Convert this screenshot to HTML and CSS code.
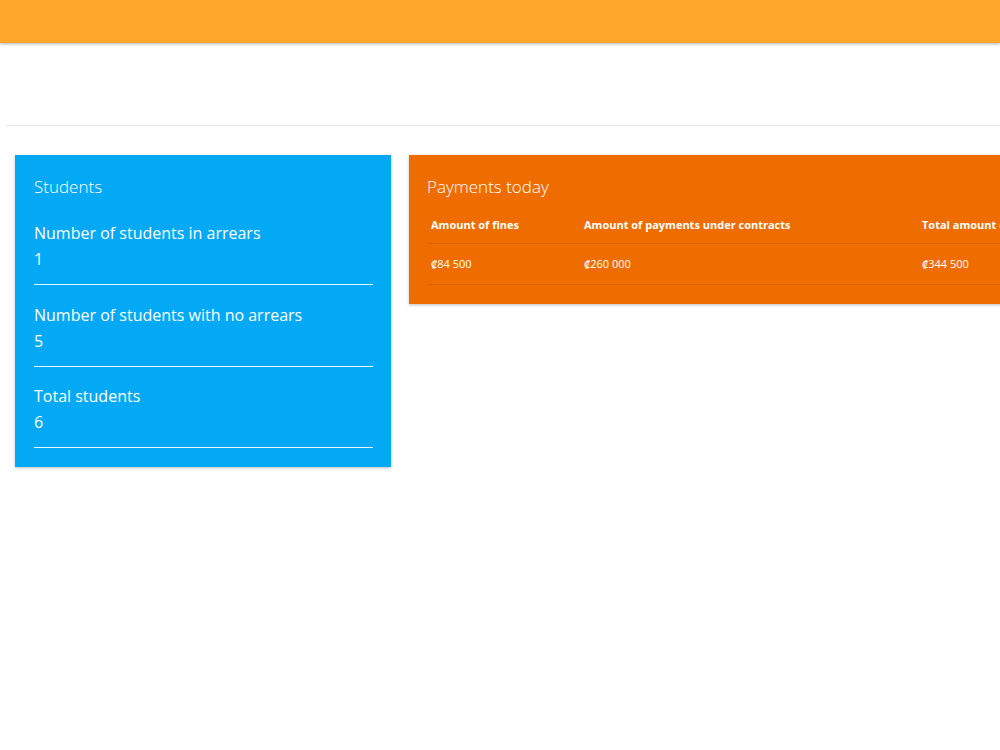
FILE: index.html
```html
<!DOCTYPE html>
<html>
<head>
<meta charset="utf-8">
<link rel="stylesheet" href="styles.css">
</head>
<body>
<header class="topbar"></header>
<div class="spacer"></div>
<main class="content">
  <section class="card card-blue">
    <h2 class="card-title">Students</h2>
    <div class="stat">
      <div class="stat-label">Number of students in arrears</div>
      <div class="stat-value">1</div>
    </div>
    <div class="stat">
      <div class="stat-label">Number of students with no arrears</div>
      <div class="stat-value">5</div>
    </div>
    <div class="stat">
      <div class="stat-label">Total students</div>
      <div class="stat-value">6</div>
    </div>
  </section>
  <section class="card card-orange">
    <h2 class="card-title">Payments today</h2>
    <table class="pay-table">
      <thead>
        <tr>
          <th class="c1">Amount of fines</th>
          <th class="c2">Amount of payments under contracts</th>
          <th class="c3">Total amount of payments</th>
        </tr>
      </thead>
      <tbody>
        <tr>
          <td>₡84 500</td>
          <td>₡260 000</td>
          <td>₡344 500</td>
        </tr>
      </tbody>
    </table>
  </section>
</main>
</body>
</html>
```
FILE: styles.css
```css
html, body {
  margin: 0;
  padding: 0;
  overflow: hidden;
  width: 1000px;
  height: 750px;
  background: #fff;
  font-family: "Open Sans", "Noto Sans", sans-serif;
  color: #fff;
}
.topbar {
  height: 43px;
  background: #FFA72A;
  box-shadow: 0 1px 3px rgba(0,0,0,0.3);
}
.spacer {
  height: 82px;
  margin-left: 6px;
  border-bottom: 1px solid #e6e6e6;
}
.content {
  display: flex;
  align-items: flex-start;
  gap: 18px;
  padding: 29px 0 0 15px;
  width: 1400px;
}
.card {
  box-shadow: 0 1px 3px rgba(0,0,0,0.25);
  box-sizing: border-box;
}
.card-title {
  margin: 0;
  font-weight: 300;
  font-size: 17px;
  line-height: 24px;
}
.card-blue {
  width: 376px;
  flex: none;
  background: #03A9F4;
  padding: 20px 18px 19px 19px;
}
.card-blue .card-title {
  margin-bottom: 19px;
}
.stat {
  border-bottom: 1.5px solid rgba(255,255,255,0.9);
  padding: 4px 0 14px;
  margin-bottom: 14.5px;
}
.stat:last-child {
  margin-bottom: 0;
}
.stat-label {
  font-size: 16px;
  line-height: 22px;
}
.stat-value {
  font-size: 16px;
  line-height: 22px;
  margin-top: 4px;
}
.card-orange {
  width: 760px;
  flex: none;
  background: #EF6C00;
  padding: 20px 18px 19px 18px;
}
.card-orange .card-title {
  margin-bottom: 9px;
}
.pay-table {
  width: 100%;
  border-collapse: collapse;
  font-size: 11px;
}
.pay-table th {
  text-align: left;
  font-weight: 700;
  padding: 9px 4px 11px;
  border-bottom: 1px solid #db6300;
}
.pay-table td {
  padding: 12px 4px 13px;
  border-bottom: 1px solid #db6300;
}
.pay-table .c1 { width: 145px; }
.pay-table .c2 { width: 330px; }
```
